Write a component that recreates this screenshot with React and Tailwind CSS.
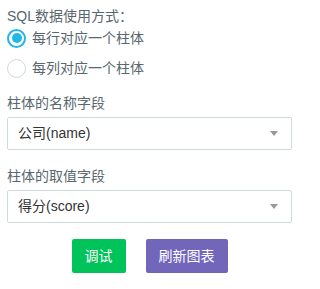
import { useState } from 'react';

function Radio({ checked, label, onClick }) {
  return (
    <div className="flex items-center h-[24px] cursor-pointer" onClick={onClick}>
      {checked ? (
        <span className="w-[19px] h-[19px] rounded-full border-2 border-[#23b7e5] flex items-center justify-center">
          <span className="w-[10px] h-[10px] rounded-full bg-[#23b7e5]" />
        </span>
      ) : (
        <span className="w-[19px] h-[19px] rounded-full border border-[#cfdadd] bg-white" />
      )}
      <span className="ml-[6px] text-[14px] text-[#58666e]">{label}</span>
    </div>
  );
}

function Select({ value }) {
  return (
    <div className="mt-[4px] h-[33px] border border-[#cfdadd] rounded-[2px] bg-white flex items-center pl-[10px] pr-[13px]">
      <span className="flex-1 text-[14px] text-[#333]">{value}</span>
      <span className="w-0 h-0 border-l-[4px] border-r-[4px] border-t-[5px] border-l-transparent border-r-transparent border-t-[#999]" />
    </div>
  );
}

export default function App() {
  const [mode, setMode] = useState('row');

  return (
    <div
      className="w-[304px] h-[289px] bg-white pl-[7px] pr-[12px] pt-[6px]"
      style={{ fontFamily: '"Liberation Sans", "Noto Sans CJK SC", sans-serif' }}
    >
      <div className="text-[14px] leading-[20px] text-[#58666e]">SQL数据使用方式：</div>
      <div className="flex flex-col gap-[6px]">
        <Radio checked={mode === 'row'} label="每行对应一个柱体" onClick={() => setMode('row')} />
        <Radio checked={mode === 'col'} label="每列对应一个柱体" onClick={() => setMode('col')} />
      </div>

      <div className="mt-[13px] text-[14px] leading-[20px] text-[#58666e]">柱体的名称字段</div>
      <Select value="公司(name)" />

      <div className="mt-[16px] text-[14px] leading-[20px] text-[#58666e]">柱体的取值字段</div>
      <Select value="得分(score)" />

      <div className="mt-[16px] flex justify-center gap-[20px]">
        <button className="h-[34px] px-[13px] rounded-[2px] bg-[#00c35a] text-white text-[14px]">调试</button>
        <button className="h-[34px] px-[13px] rounded-[2px] bg-[#7266ba] text-white text-[14px]">刷新图表</button>
      </div>
    </div>
  );
}
